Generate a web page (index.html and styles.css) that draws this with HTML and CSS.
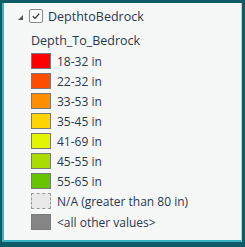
FILE: index.html
```html
<!DOCTYPE html>
<html lang="en">
<head>
    <meta charset="UTF-8">
    <title>Legend</title>
    <link rel="stylesheet" href="styles.css">
</head>
<body>
    <div class="frame">
        <div class="panel">
            <div class="layer">
                <span class="expander"></span>
                <span class="checkbox">
                    <svg width="14" height="14" viewBox="0 0 14 14">
                        <path d="M3.2 7.2 L5.8 9.8 L10.8 4.4" fill="none" stroke="#3a3a3a" stroke-width="1.5"/>
                    </svg>
                </span>
                <span class="layer-name">DepthtoBedrock</span>
            </div>
            <div class="field">Depth_To_Bedrock</div>
            <ul class="classes">
                <li><span class="swatch c1"></span>18-32 in</li>
                <li><span class="swatch c2"></span>22-32 in</li>
                <li><span class="swatch c3"></span>33-53 in</li>
                <li><span class="swatch c4"></span>35-45 in</li>
                <li><span class="swatch c5"></span>41-69 in</li>
                <li><span class="swatch c6"></span>45-55 in</li>
                <li><span class="swatch c7"></span>55-65 in</li>
                <li><span class="swatch empty"></span>N/A (greater than 80 in)</li>
                <li class="other"><span class="swatch rest"></span>&lt;all other values&gt;</li>
            </ul>
        </div>
    </div>
</body>
</html>
```

FILE: styles.css
```css
body {
    margin: 0;
    background-color: #0f5b67;
    font-family: "Open Sans", "Noto Sans", sans-serif;
    font-size: 12px;
    color: #2a3752;
}
.frame {
    width: 245px;
    height: 247px;
    box-sizing: border-box;
    border-top: 3px solid #0f5b67;
    border-left: 2px solid #0f5b67;
    border-right: 3px solid #0f5b67;
    border-bottom: 5px solid #0f5b67;
}
.panel {
    height: 100%;
    box-sizing: border-box;
    background-color: #f6f8f8;
    border-left: 2px solid #3db3c6;
    border-bottom: 2px solid #3db3c6;
    border-right: 1px solid #c9cccc;
    padding: 6px 0 0 12px;
}
.layer {
    display: flex;
    align-items: center;
    height: 14px;
}
.expander {
    width: 0;
    height: 0;
    border-left: 5px solid transparent;
    border-bottom: 5px solid #555;
    margin: 2px 6px 0 2px;
}
.checkbox {
    width: 12px;
    height: 12px;
    border: 1px solid #8a8a8a;
    border-radius: 2px;
    background-color: #fff;
    display: flex;
    align-items: center;
    justify-content: center;
}
.layer-name {
    margin-left: 5px;
    font-size: 12.5px;
}
.field {
    margin: 9px 0 0 15px;
    height: 17px;
    line-height: 17px;
    font-size: 12.5px;
}
.classes {
    list-style: none;
    margin: 4px 0 0 15px;
    padding: 0;
}
.classes li {
    display: flex;
    align-items: center;
    height: 16px;
    margin-bottom: 4px;
    white-space: nowrap;
}
.classes li.other {
    margin-top: 5px;
}
.swatch {
    width: 18px;
    height: 14px;
    border: 1px solid #7a7a7a;
    margin-right: 6px;
    flex-shrink: 0;
}
.c1 { background-color: #ff0000; }
.c2 { background-color: #ff4d00; }
.c3 { background-color: #ff8f00; }
.c4 { background-color: #ffd400; }
.c5 { background-color: #e3f500; }
.c6 { background-color: #a9dc00; }
.c7 { background-color: #68c300; }
.empty {
    background-color: #e8e8e8;
    border: 1px dashed #9a9a9a;
}
.rest { background-color: #858585; }
```
